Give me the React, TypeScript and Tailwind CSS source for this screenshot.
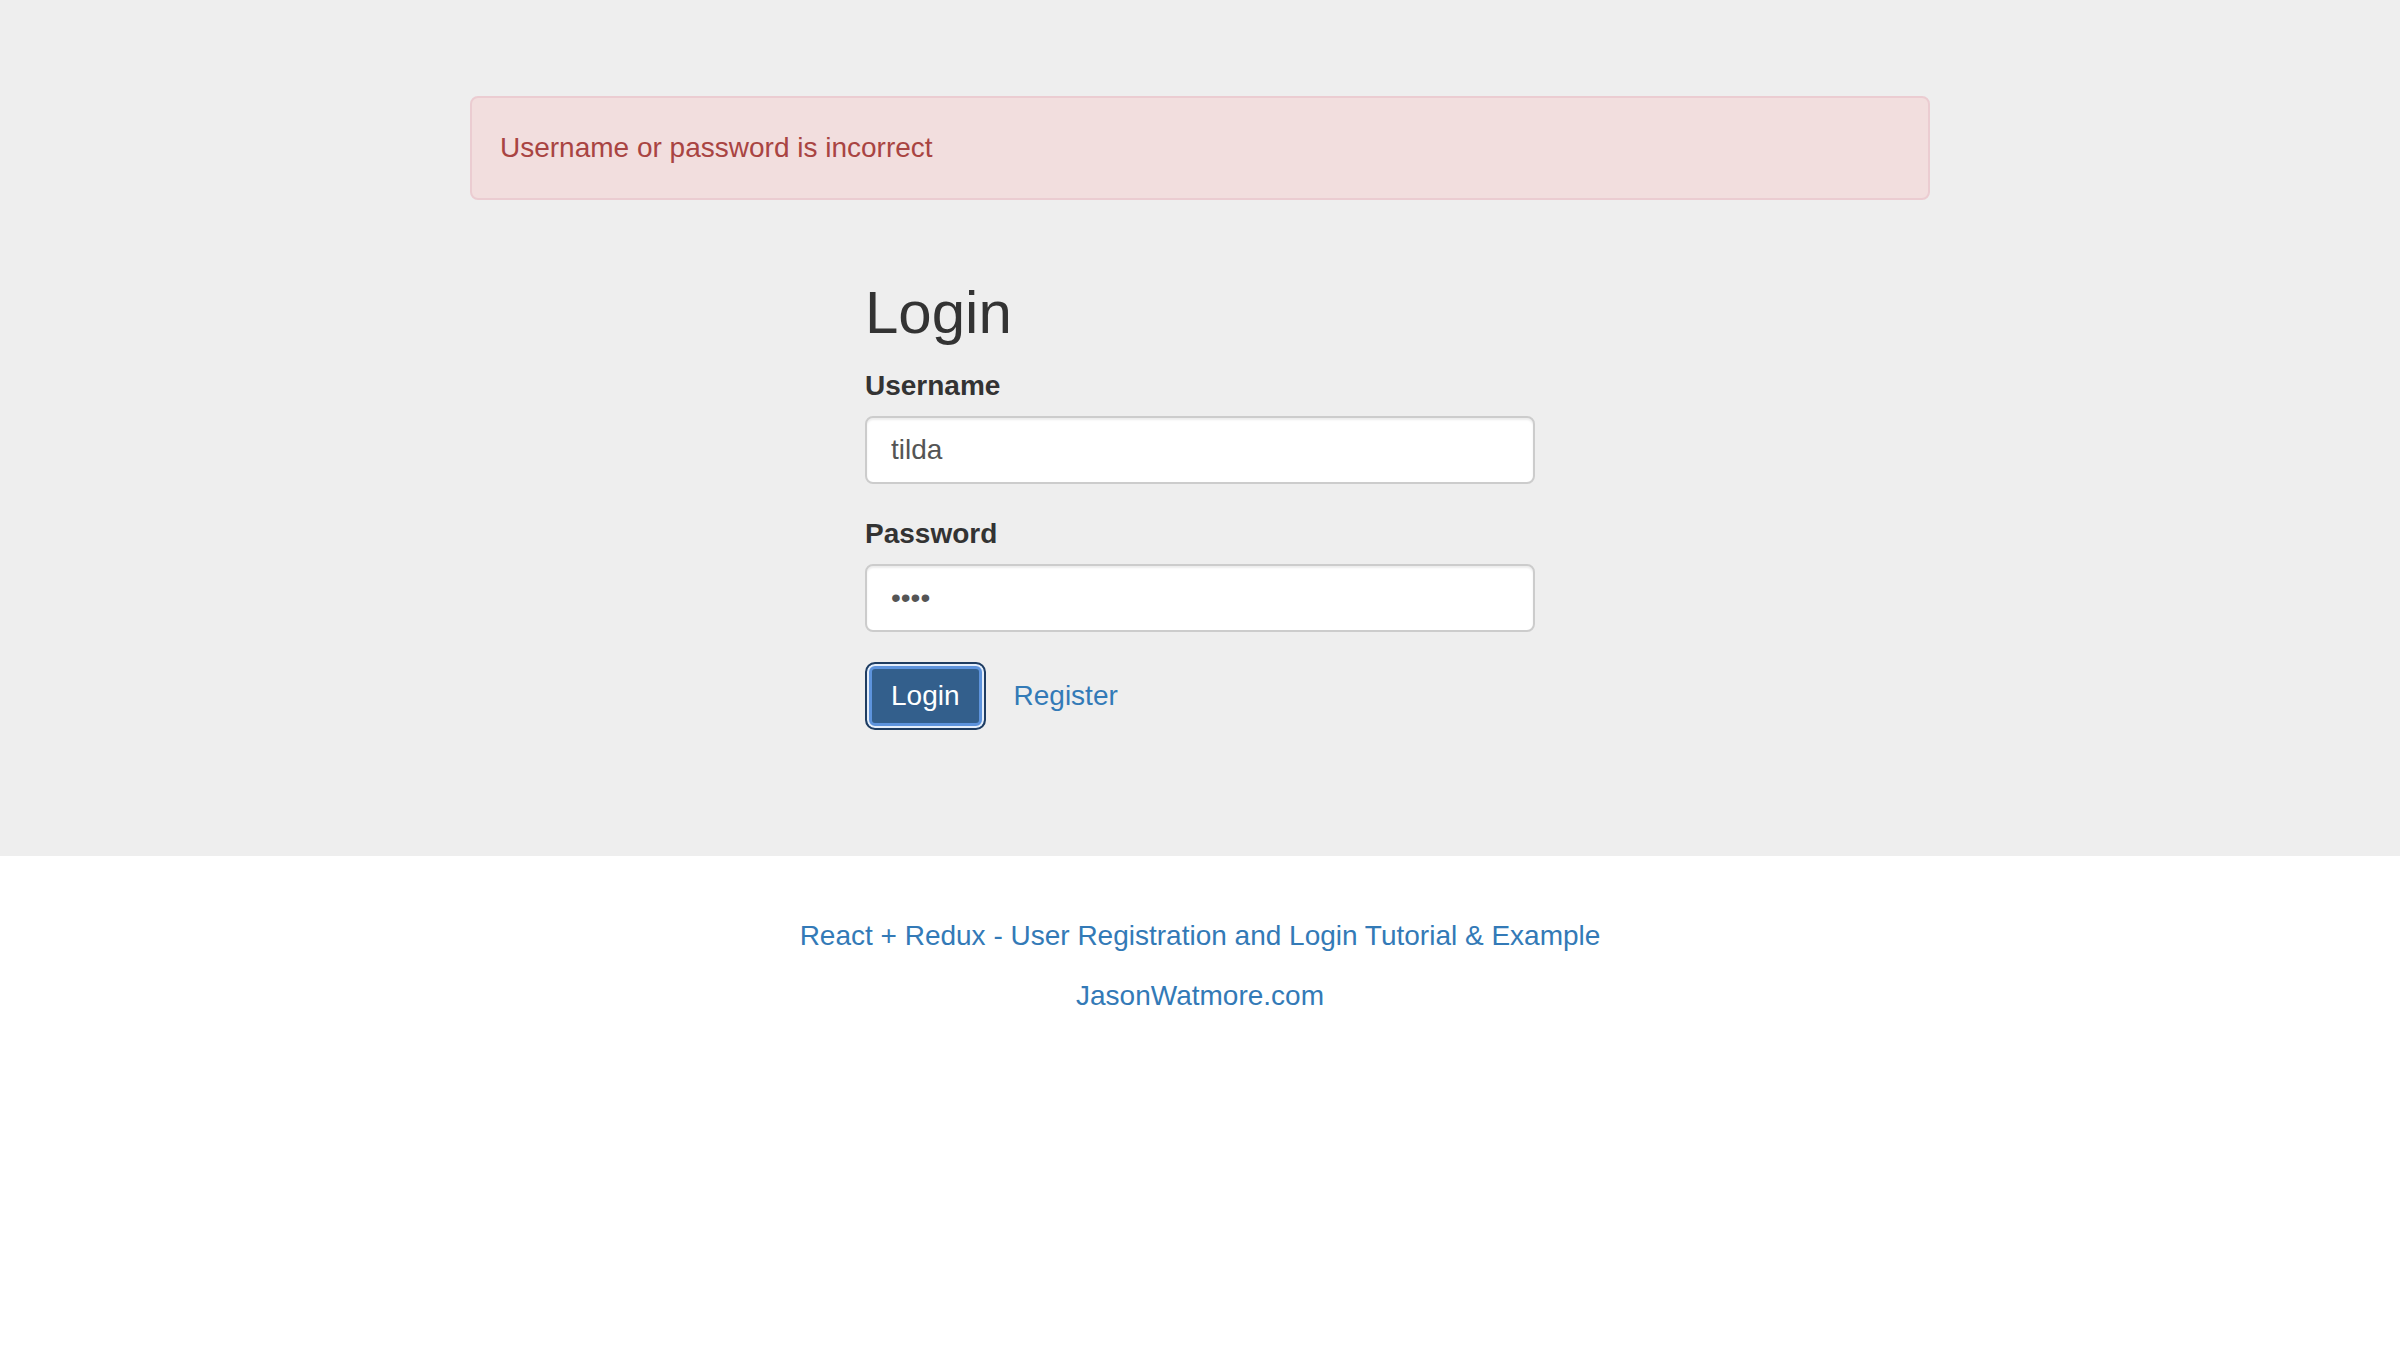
import { useState } from "react";

export default function App() {
  const [username, setUsername] = useState("tilda");
  const [password, setPassword] = useState("test");

  return (
    <div className="min-h-screen bg-white font-['Liberation_Sans',Arial,sans-serif] text-[28px] leading-[40px] text-[#333]">
      {/* jumbotron */}
      <div className="bg-[#eee] pt-[96px] pb-[96px] mb-[60px]">
        <div className="mx-auto w-[1460px]">
          <div className="rounded-[8px] border-2 border-[#ebccd1] bg-[#f2dede] px-[28px] py-[30px] text-[#a94442]">
            Username or password is incorrect
          </div>

          <div className="ml-[395px] w-[670px] pt-[80px]">
            <h2 className="mb-[20px] text-[60px] leading-[66px] font-medium">Login</h2>
            <form onSubmit={(e) => e.preventDefault()}>
              <div className="mb-[30px]">
                <label className="mb-[10px] block font-bold">Username</label>
                <input
                  type="text"
                  value={username}
                  onChange={(e) => setUsername(e.target.value)}
                  className="block h-[68px] w-full rounded-[8px] border-2 border-[#ccc] bg-white px-[24px] py-[12px] text-[28px] text-[#555] shadow-[inset_0_2px_2px_rgba(0,0,0,0.075)] outline-none"
                />
              </div>
              <div className="mb-[30px]">
                <label className="mb-[10px] block font-bold">Password</label>
                <input
                  type="password"
                  value={password}
                  onChange={(e) => setPassword(e.target.value)}
                  className="block h-[68px] w-full rounded-[8px] border-2 border-[#ccc] bg-white px-[24px] py-[12px] text-[28px] text-[#555] shadow-[inset_0_2px_2px_rgba(0,0,0,0.075)] outline-none"
                />
              </div>
              <div className="mb-[30px] flex items-center">
                <button
                  type="submit"
                  className="h-[68px] rounded-[10px] border-2 border-[#1f3d62] bg-[#335f8c] px-[24px] text-[28px] leading-[40px] text-white shadow-[inset_0_0_0_2px_#e4eefb,inset_0_0_0_5px_#5d93dc]"
                >
                  Login
                </button>
                <a href="#" className="ml-[2px] border-2 border-transparent px-[24px] py-[12px] text-[#337ab7]">
                  Register
                </a>
              </div>
            </form>
          </div>
        </div>
      </div>

      {/* credits */}
      <div className="text-center">
        <p className="mb-[20px]">
          <a href="#" className="text-[#337ab7]">
            React + Redux - User Registration and Login Tutorial &amp; Example
          </a>
        </p>
        <p className="mb-[20px]">
          <a href="#" className="text-[#337ab7]">
            JasonWatmore.com
          </a>
        </p>
      </div>
    </div>
  );
}
